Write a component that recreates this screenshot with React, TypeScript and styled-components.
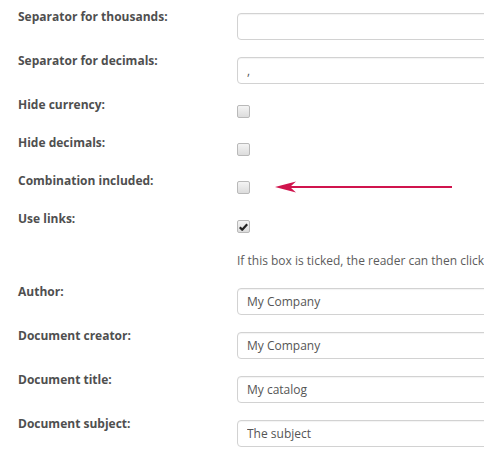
import React from "react";
import styled, { createGlobalStyle } from "styled-components";

const Global = createGlobalStyle`
  html, body {
    margin: 0;
    padding: 0;
    background: #ffffff;
    overflow: hidden;
  }
  body {
    font-family: "Open Sans", "Liberation Sans", sans-serif;
    font-size: 12px;
    color: #555555;
  }
`;

const Form = styled.div`
  padding: 8px 0 0 18px;
  width: 520px;
  display: flex;
  flex-direction: column;
`;

const Row = styled.div<{ $h: number }>`
  display: grid;
  grid-template-columns: 219px 1fr;
  height: ${(p) => p.$h}px;
  align-items: start;
`;

const Label = styled.div`
  font-weight: 700;
  font-size: 12px;
  line-height: 17px;
  color: #4f4f4f;
`;

const Control = styled.div<{ $top: number }>`
  position: relative;
  padding-top: ${(p) => p.$top}px;
`;

const TextInput = styled.input`
  box-sizing: border-box;
  display: block;
  width: 280px;
  height: 27px;
  margin: 0;
  padding: 4px 9px;
  border: 1px solid #d2d2d2;
  border-radius: 4px;
  background: #ffffff;
  box-shadow: inset 0 1px 1px rgba(0, 0, 0, 0.05);
  font-family: "Open Sans", "Liberation Sans", sans-serif;
  font-size: 12px;
  line-height: 17px;
  color: #555555;
  outline: none;
`;

const Box = styled.span`
  box-sizing: border-box;
  display: flex;
  align-items: center;
  justify-content: center;
  width: 13px;
  height: 13px;
  border: 1px solid #b9b9b9;
  border-radius: 2px;
  background: linear-gradient(#f4f4f4, #dcdcdc);
`;

const Help = styled.div`
  padding-top: 4px;
  font-size: 12px;
  line-height: 17px;
  color: #5c5c5c;
  white-space: nowrap;
`;

const Arrow = styled.svg`
  position: absolute;
  left: 38px;
  top: 9px;
`;

type Field =
  | { kind: "text"; label: string; value: string }
  | { kind: "check"; label: string; checked?: boolean; arrow?: boolean; top?: number };

const fieldsTop: Field[] = [
  { kind: "text", label: "Separator for thousands:", value: "" },
  { kind: "text", label: "Separator for decimals:", value: "," },
  { kind: "check", label: "Hide currency:" },
  { kind: "check", label: "Hide decimals:" },
  { kind: "check", label: "Combination included:", arrow: true },
  { kind: "check", label: "Use links:", checked: true, top: 10 },
];

const fieldsBottom: Field[] = [
  { kind: "text", label: "Author:", value: "My Company" },
  { kind: "text", label: "Document creator:", value: "My Company" },
  { kind: "text", label: "Document title:", value: "My catalog" },
  { kind: "text", label: "Document subject:", value: "The subject" },
];

function CheckMark() {
  return (
    <svg width="9" height="8" viewBox="0 0 9 8">
      <path d="M0.8 4.2 L3.2 6.8 L8.2 1.2" fill="none" stroke="#222" strokeWidth="2.2" strokeLinejoin="round" />
    </svg>
  );
}

function FieldRow({ f }: { f: Field }) {
  if (f.kind === "text") {
    return (
      <Row $h={44}>
        <Label>{f.label}</Label>
        <Control $top={5}>
          <TextInput type="text" defaultValue={f.value} readOnly />
        </Control>
      </Row>
    );
  }
  return (
    <Row $h={38}>
      <Label>{f.label}</Label>
      <Control $top={f.top ?? 9}>
        <Box>{f.checked ? <CheckMark /> : null}</Box>
        {f.arrow ? (
          <Arrow width="178" height="12" viewBox="0 0 178 12">
            <line x1="12" y1="6" x2="177" y2="6" stroke="#d0144d" strokeWidth="2" />
            <path d="M0 6 L21 0.5 L15 6 L21 11.5 Z" fill="#d0144d" />
          </Arrow>
        ) : null}
      </Control>
    </Row>
  );
}

export default function App() {
  return (
    <>
      <Global />
      <Form>
        {fieldsTop.map((f) => (
          <FieldRow key={f.label} f={f} />
        ))}
        <Row $h={35}>
          <span />
          <Help>If this box is ticked, the reader can then click</Help>
        </Row>
        {fieldsBottom.map((f) => (
          <FieldRow key={f.label} f={f} />
        ))}
      </Form>
    </>
  );
}
